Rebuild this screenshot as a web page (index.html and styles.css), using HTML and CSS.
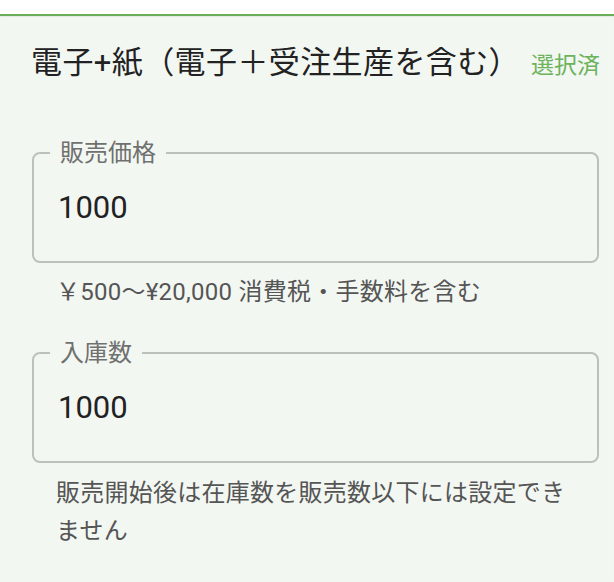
FILE: index.html
```html
<!DOCTYPE html>
<html lang="ja">
<head>
<meta charset="utf-8">
<title>販売設定</title>
<link rel="stylesheet" href="styles.css">
</head>
<body>
<div class="topbar"></div>
<section class="panel">
  <div class="title-row">
    <h2 class="title">電子+紙（電子＋受注生産を含む）</h2>
    <span class="status">選択済</span>
  </div>

  <fieldset class="field">
    <legend class="field-label">販売価格</legend>
    <div class="field-value">1000</div>
  </fieldset>
  <p class="helper helper-first">￥500〜¥20,000 消費税・手数料を含む</p>

  <fieldset class="field">
    <legend class="field-label">入庫数</legend>
    <div class="field-value">1000</div>
  </fieldset>
  <p class="helper">販売開始後は在庫数を販売数以下には設定できません</p>
</section>
</body>
</html>
```

FILE: styles.css
```css
html {
  background: #f3f7f2;
}
body {
  margin: 0;
  font-family: Roboto, "Noto Sans CJK JP", sans-serif;
  color: #222;
  min-height: 582px;
}
.topbar {
  height: 14px;
  background: #ffffff;
}
.panel {
  border-top: 2px solid #6aae5a;
  box-shadow: inset 0 1px 1px rgba(0, 0, 0, 0.06);
  background: #f3f7f2;
  padding: 27px 14px 30px 31px;
}
.title-row {
  display: flex;
  align-items: flex-start;
  justify-content: space-between;
}
.title {
  margin: 0;
  font-size: 31px;
  line-height: 40px;
  font-weight: 400;
  letter-spacing: 0.4px;
  color: #222;
}
.status {
  padding-top: 9px;
  font-size: 23px;
  line-height: 28px;
  color: #6cb35c;
}
.field {
  margin: 56px 1px 0 1px;
  border: 2px solid #bcc1bb;
  border-radius: 8px;
  padding: 23px 16px 35px 24px;
  min-inline-size: 0;
}
.field-label {
  margin-left: -8px;
  padding: 0 10px;
  font-size: 24px;
  line-height: 28px;
  color: #6f706f;
}
.field-value {
  font-size: 31px;
  line-height: 36px;
  color: #222;
}
.helper {
  margin: 11px 24px 0 25px;
  font-size: 24px;
  line-height: 38px;
  letter-spacing: 0.25px;
  color: #555;
}
.helper-first {
  margin-top: 10px;
  margin-bottom: 28px;
}
.helper-first + .field {
  margin-top: 0;
}
```
